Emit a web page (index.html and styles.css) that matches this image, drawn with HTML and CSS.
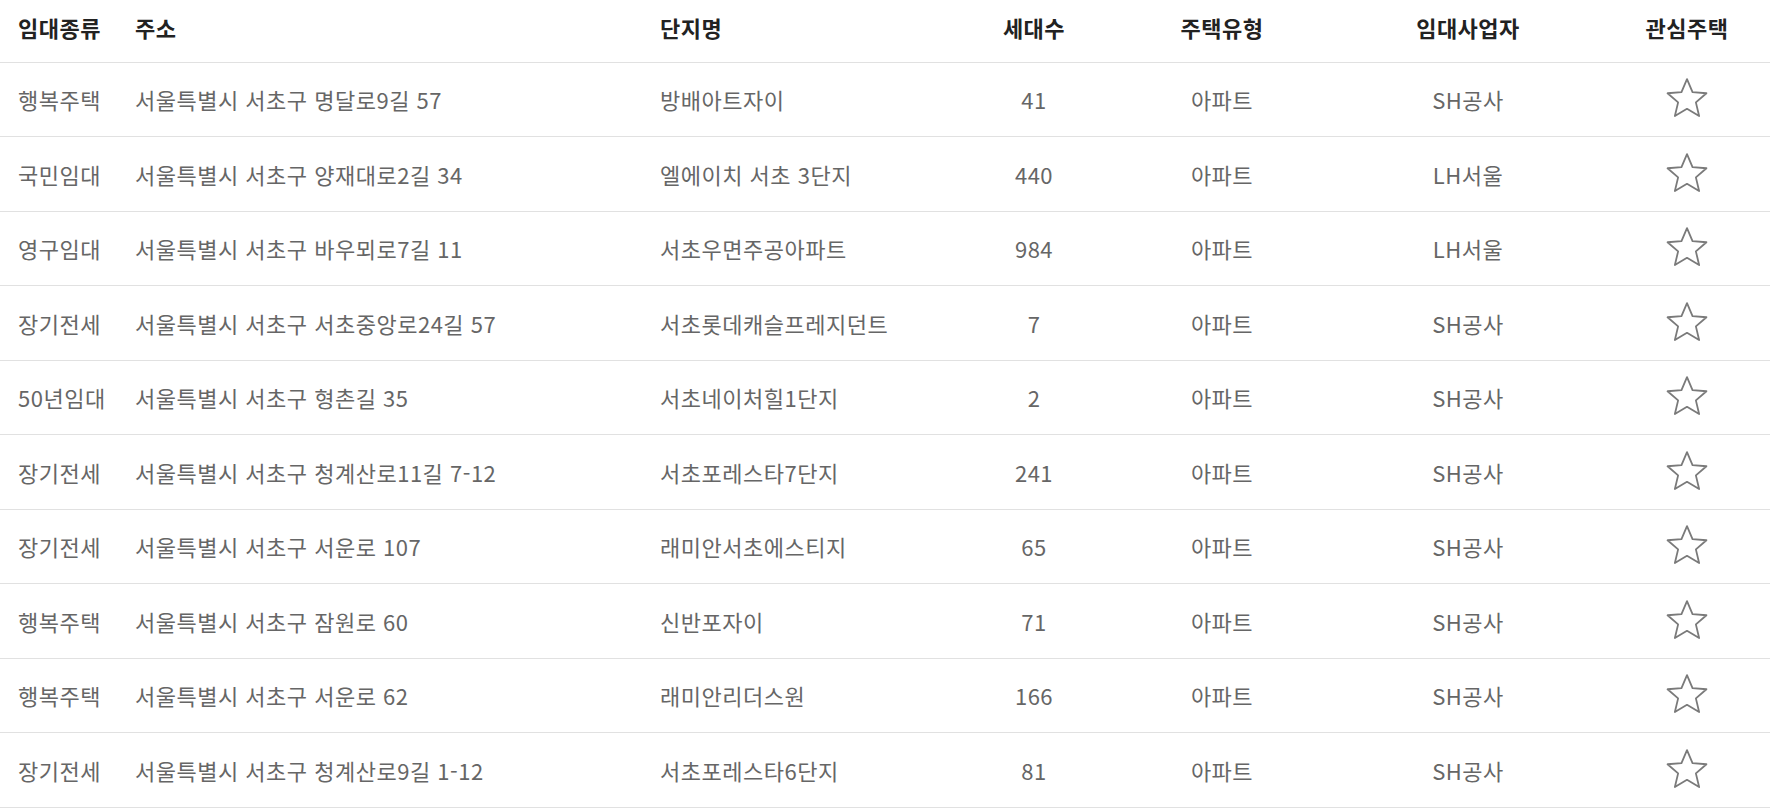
FILE: index.html
```html
<!DOCTYPE html>
<html lang="ko">
<head>
<meta charset="utf-8">
<title>임대주택 목록</title>
<link rel="stylesheet" href="styles.css">
</head>
<body>
<table class="list">
  <colgroup>
    <col class="c-type"><col class="c-addr"><col class="c-name"><col class="c-units"><col class="c-kind"><col class="c-biz"><col class="c-fav">
  </colgroup>
  <thead>
    <tr>
      <th class="left">임대종류</th>
      <th class="left">주소</th>
      <th class="left">단지명</th>
      <th>세대수</th>
      <th>주택유형</th>
      <th>임대사업자</th>
      <th>관심주택</th>
    </tr>
  </thead>
  <tbody>
    <tr><td class="left">행복주택</td><td class="left">서울특별시 서초구 명달로9길 57</td><td class="left">방배아트자이</td><td>41</td><td>아파트</td><td>SH공사</td><td><svg class="star" viewBox="0 0 40 40"><path d="M20 3.5 L24.6 14.2 L36.2 15.2 L27.4 22.8 L30.1 34.2 L20 28.2 L9.9 34.2 L12.6 22.8 L3.8 15.2 L15.4 14.2 Z"/></svg></td></tr>
    <tr><td class="left">국민임대</td><td class="left">서울특별시 서초구 양재대로2길 34</td><td class="left">엘에이치 서초 3단지</td><td>440</td><td>아파트</td><td>LH서울</td><td><svg class="star" viewBox="0 0 40 40"><path d="M20 3.5 L24.6 14.2 L36.2 15.2 L27.4 22.8 L30.1 34.2 L20 28.2 L9.9 34.2 L12.6 22.8 L3.8 15.2 L15.4 14.2 Z"/></svg></td></tr>
    <tr><td class="left">영구임대</td><td class="left">서울특별시 서초구 바우뫼로7길 11</td><td class="left">서초우면주공아파트</td><td>984</td><td>아파트</td><td>LH서울</td><td><svg class="star" viewBox="0 0 40 40"><path d="M20 3.5 L24.6 14.2 L36.2 15.2 L27.4 22.8 L30.1 34.2 L20 28.2 L9.9 34.2 L12.6 22.8 L3.8 15.2 L15.4 14.2 Z"/></svg></td></tr>
    <tr><td class="left">장기전세</td><td class="left">서울특별시 서초구 서초중앙로24길 57</td><td class="left">서초롯데캐슬프레지던트</td><td>7</td><td>아파트</td><td>SH공사</td><td><svg class="star" viewBox="0 0 40 40"><path d="M20 3.5 L24.6 14.2 L36.2 15.2 L27.4 22.8 L30.1 34.2 L20 28.2 L9.9 34.2 L12.6 22.8 L3.8 15.2 L15.4 14.2 Z"/></svg></td></tr>
    <tr><td class="left">50년임대</td><td class="left">서울특별시 서초구 형촌길 35</td><td class="left">서초네이처힐1단지</td><td>2</td><td>아파트</td><td>SH공사</td><td><svg class="star" viewBox="0 0 40 40"><path d="M20 3.5 L24.6 14.2 L36.2 15.2 L27.4 22.8 L30.1 34.2 L20 28.2 L9.9 34.2 L12.6 22.8 L3.8 15.2 L15.4 14.2 Z"/></svg></td></tr>
    <tr><td class="left">장기전세</td><td class="left">서울특별시 서초구 청계산로11길 7-12</td><td class="left">서초포레스타7단지</td><td>241</td><td>아파트</td><td>SH공사</td><td><svg class="star" viewBox="0 0 40 40"><path d="M20 3.5 L24.6 14.2 L36.2 15.2 L27.4 22.8 L30.1 34.2 L20 28.2 L9.9 34.2 L12.6 22.8 L3.8 15.2 L15.4 14.2 Z"/></svg></td></tr>
    <tr><td class="left">장기전세</td><td class="left">서울특별시 서초구 서운로 107</td><td class="left">래미안서초에스티지</td><td>65</td><td>아파트</td><td>SH공사</td><td><svg class="star" viewBox="0 0 40 40"><path d="M20 3.5 L24.6 14.2 L36.2 15.2 L27.4 22.8 L30.1 34.2 L20 28.2 L9.9 34.2 L12.6 22.8 L3.8 15.2 L15.4 14.2 Z"/></svg></td></tr>
    <tr><td class="left">행복주택</td><td class="left">서울특별시 서초구 잠원로 60</td><td class="left">신반포자이</td><td>71</td><td>아파트</td><td>SH공사</td><td><svg class="star" viewBox="0 0 40 40"><path d="M20 3.5 L24.6 14.2 L36.2 15.2 L27.4 22.8 L30.1 34.2 L20 28.2 L9.9 34.2 L12.6 22.8 L3.8 15.2 L15.4 14.2 Z"/></svg></td></tr>
    <tr><td class="left">행복주택</td><td class="left">서울특별시 서초구 서운로 62</td><td class="left">래미안리더스원</td><td>166</td><td>아파트</td><td>SH공사</td><td><svg class="star" viewBox="0 0 40 40"><path d="M20 3.5 L24.6 14.2 L36.2 15.2 L27.4 22.8 L30.1 34.2 L20 28.2 L9.9 34.2 L12.6 22.8 L3.8 15.2 L15.4 14.2 Z"/></svg></td></tr>
    <tr><td class="left">장기전세</td><td class="left">서울특별시 서초구 청계산로9길 1-12</td><td class="left">서초포레스타6단지</td><td>81</td><td>아파트</td><td>SH공사</td><td><svg class="star" viewBox="0 0 40 40"><path d="M20 3.5 L24.6 14.2 L36.2 15.2 L27.4 22.8 L30.1 34.2 L20 28.2 L9.9 34.2 L12.6 22.8 L3.8 15.2 L15.4 14.2 Z"/></svg></td></tr>
  </tbody>
</table>
</body>
</html>
```
FILE: styles.css
```css
html, body {
  margin: 0;
  padding: 0;
  background: #fff;
}
body {
  font-family: "Noto Sans CJK KR", "Noto Sans", sans-serif;
}
.list {
  width: 1770px;
  border-collapse: collapse;
  table-layout: fixed;
}
.c-type { width: 117px; }
.c-addr { width: 525px; }
.c-name { width: 314px; }
.c-units { width: 156px; }
.c-kind { width: 220px; }
.c-biz { width: 272px; }
.c-fav { width: 166px; }

.list th,
.list td {
  text-align: center;
  vertical-align: middle;
  padding: 0;
  border-bottom: 1px solid #e1e1e1;
  white-space: nowrap;
  letter-spacing: 0.5px;
}
.list th {
  height: 62px;
  padding-bottom: 8px;
  box-sizing: border-box;
  font-size: 22px;
  font-weight: 700;
  color: #222;
}
.list td {
  height: 73.5px;
  font-size: 22px;
  color: #666;
}
.list .left {
  text-align: left;
  padding-left: 18px;
}
.star {
  display: block;
  width: 48px;
  height: 48px;
  margin: 0 auto;
  fill: none;
  stroke: #7a7a7a;
  stroke-width: 1.5;
  stroke-linejoin: round;
}
```
